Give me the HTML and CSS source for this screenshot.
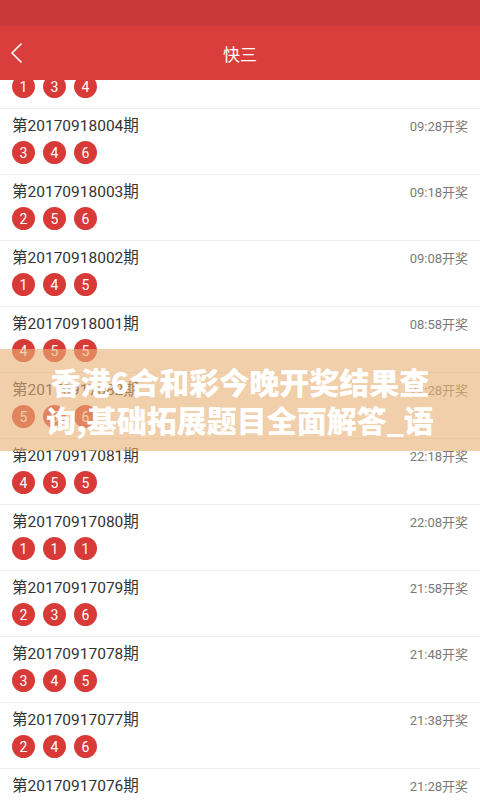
FILE: index.html
```html
<!DOCTYPE html>
<html lang="zh-CN">
<head>
<meta charset="utf-8">
<title>快三</title>
<link rel="stylesheet" href="styles.css">
</head>
<body>
<div class="app">
  <div class="statusbar"></div>
  <header class="navbar">
    <span class="back">
      <svg width="14" height="20" viewBox="0 0 14 20"><path d="M11 1 L2 10 L11 19" fill="none" stroke="#fff" stroke-width="1.6" stroke-linecap="round" stroke-linejoin="round"/></svg>
    </span>
    <h1 class="title">快三</h1>
  </header>
  <main class="list">
    <div class="list-inner">
      <div class="row"><div class="row-head"><span class="period">第20170918005期</span><span class="time">09:38开奖</span></div><div class="balls"><span class="ball">1</span><span class="ball">3</span><span class="ball">4</span></div></div>
      <div class="row"><div class="row-head"><span class="period">第20170918004期</span><span class="time">09:28开奖</span></div><div class="balls"><span class="ball">3</span><span class="ball">4</span><span class="ball">6</span></div></div>
      <div class="row"><div class="row-head"><span class="period">第20170918003期</span><span class="time">09:18开奖</span></div><div class="balls"><span class="ball">2</span><span class="ball">5</span><span class="ball">6</span></div></div>
      <div class="row"><div class="row-head"><span class="period">第20170918002期</span><span class="time">09:08开奖</span></div><div class="balls"><span class="ball">1</span><span class="ball">4</span><span class="ball">5</span></div></div>
      <div class="row"><div class="row-head"><span class="period">第20170918001期</span><span class="time">08:58开奖</span></div><div class="balls"><span class="ball">4</span><span class="ball">5</span><span class="ball">5</span></div></div>
      <div class="row"><div class="row-head"><span class="period">第20170917082期</span><span class="time">22:28开奖</span></div><div class="balls"><span class="ball">5</span><span class="ball">5</span><span class="ball">6</span></div></div>
      <div class="row"><div class="row-head"><span class="period">第20170917081期</span><span class="time">22:18开奖</span></div><div class="balls"><span class="ball">4</span><span class="ball">5</span><span class="ball">5</span></div></div>
      <div class="row"><div class="row-head"><span class="period">第20170917080期</span><span class="time">22:08开奖</span></div><div class="balls"><span class="ball">1</span><span class="ball">1</span><span class="ball">1</span></div></div>
      <div class="row"><div class="row-head"><span class="period">第20170917079期</span><span class="time">21:58开奖</span></div><div class="balls"><span class="ball">2</span><span class="ball">3</span><span class="ball">6</span></div></div>
      <div class="row"><div class="row-head"><span class="period">第20170917078期</span><span class="time">21:48开奖</span></div><div class="balls"><span class="ball">3</span><span class="ball">4</span><span class="ball">5</span></div></div>
      <div class="row"><div class="row-head"><span class="period">第20170917077期</span><span class="time">21:38开奖</span></div><div class="balls"><span class="ball">2</span><span class="ball">4</span><span class="ball">6</span></div></div>
      <div class="row"><div class="row-head"><span class="period">第20170917076期</span><span class="time">21:28开奖</span></div><div class="balls"><span class="ball">1</span><span class="ball">2</span><span class="ball">3</span></div></div>
    </div>
  </main>
  <div class="banner">
    <span class="banner-line">香港6合和彩今晚开奖结果查</span>
    <span class="banner-line">询,基础拓展题目全面解答_语</span>
  </div>
</div>
</body>
</html>
```

FILE: styles.css
```css
* { box-sizing: border-box; }
html, body {
  margin: 0;
  padding: 0;
  background: #fff;
}
body {
  font-family: Roboto, "Noto Sans CJK SC", sans-serif;
}
.app {
  position: relative;
  width: 480px;
  height: 800px;
  overflow: hidden;
  display: flex;
  flex-direction: column;
}
.statusbar {
  height: 26px;
  background: #c9393a;
  flex: none;
}
.navbar {
  height: 54px;
  background: #d93e3c;
  flex: none;
  display: flex;
  align-items: center;
  justify-content: center;
  position: relative;
  z-index: 2;
}
.back {
  position: absolute;
  left: 10px;
  top: 17px;
  display: flex;
}
.title {
  margin: 0;
  font-family: "Noto Sans CJK SC", sans-serif;
  font-weight: 400;
  font-size: 17px;
  color: #fff;
  line-height: 20px;
  padding-top: 2px;
}
.list {
  flex: 1;
  overflow: hidden;
}
.list-inner {
  margin-top: -37px;
}
.row {
  height: 66px;
  padding: 8px 12px 0 12px;
  border-bottom: 1px solid #eeeeee;
}
.row-head {
  display: flex;
  justify-content: space-between;
  align-items: baseline;
  height: 18px;
}
.period {
  font-size: 15.5px;
  line-height: 18px;
  color: #333;
}
.time {
  font-size: 13px;
  line-height: 18px;
  color: #7a7a7a;
}
.balls {
  display: flex;
  gap: 8px;
  margin-top: 6px;
}
.ball {
  width: 23px;
  height: 23px;
  border-radius: 50%;
  background: #d83a37;
  color: #fff;
  font-size: 14px;
  display: flex;
  align-items: center;
  justify-content: center;
  line-height: 1;
}
.banner {
  position: absolute;
  left: 0;
  right: 0;
  top: 349px;
  height: 102px;
  background: rgba(230, 178, 118, 0.62);
  display: flex;
  flex-direction: column;
  align-items: center;
  justify-content: center;
  z-index: 3;
}
.banner-line {
  font-family: "Noto Sans CJK SC", sans-serif;
  font-weight: 900;
  font-size: 30px;
  line-height: 38px;
  color: #fff;
  white-space: nowrap;
}
```
